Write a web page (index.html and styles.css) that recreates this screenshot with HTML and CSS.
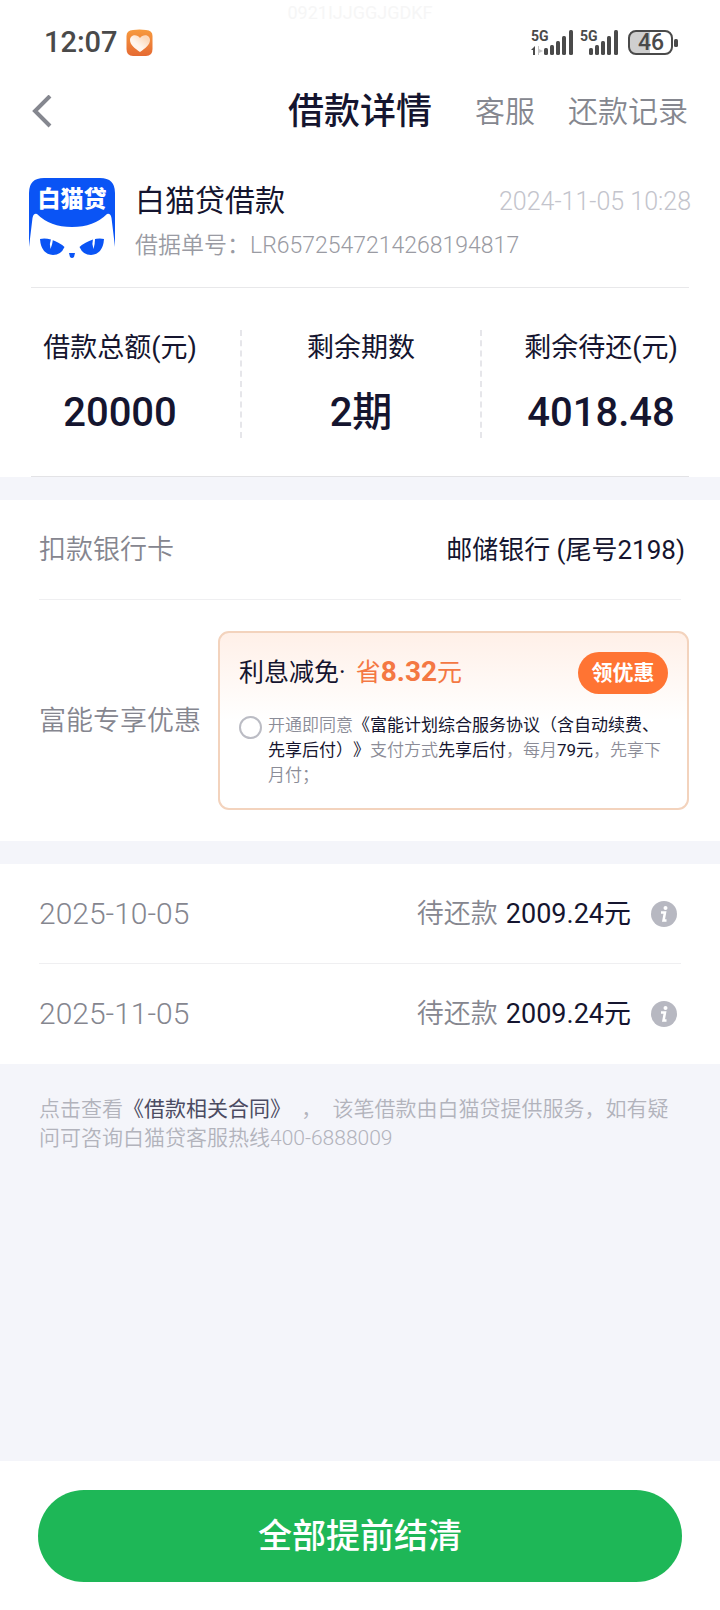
FILE: index.html
```html
<!DOCTYPE html>
<html lang="zh-CN">
<head>
<meta charset="utf-8">
<meta name="viewport" content="width=device-width, initial-scale=1">
<title>借款详情</title>
<link rel="stylesheet" href="styles.css">
</head>
<body>
<div class="page">
  <div class="watermark">0921IJJGGJGDKF</div>
  <div class="status">
    <div class="status-left">
      <span class="clock">12:07</span>
      <svg class="app-badge" viewBox="0 0 27 27" aria-hidden="true">
        <defs>
          <linearGradient id="badge" x1="0" y1="0" x2="0" y2="1"><stop offset="0" stop-color="#f79a3e"/><stop offset="1" stop-color="#e56a33"/></linearGradient>
          <linearGradient id="heart" x1="1" y1="0" x2="0" y2="1"><stop offset="0.2" stop-color="#fcd9bb"/><stop offset="0.6" stop-color="#fff6ee"/></linearGradient>
        </defs>
        <path d="M7 1Q13.500 0 20 1Q26.500 1.500 26.500 7V20Q26.500 27 20 27H7Q0.500 27 0.500 20V7Q0.500 1.500 7 1Z" fill="url(#badge)"/>
        <path d="M14 23C9 19.500 4 16 4 11C4 5.500 11 4.500 14 9C17 4.500 24 5.500 24 11C24 16 19 19.500 14 23Z" fill="url(#heart)"/>
      </svg>
    </div>
    <svg class="signals" viewBox="0 0 148 28" aria-hidden="true">
      <g fill="#4a4a4a">
        <text x="0" y="13" class="net">5G</text>
        <text x="49" y="13" class="net">5G</text>
        <path d="M0 22L4 18V27H2V22Z"/>
        <path d="M7 18H8V21L12 23L8 25V27H7Z" fill="#c4c4c4"/>
        <rect x="13" y="20" width="4" height="7" rx="1.500"/><rect x="19" y="17" width="4" height="10" rx="1.500"/><rect x="25" y="13" width="4" height="14" rx="1.500"/><rect x="31" y="8" width="4" height="19" rx="1.500"/><rect x="38" y="2" width="4" height="25" rx="1.500"/>
        <rect x="58" y="20" width="4" height="7" rx="1.500"/><rect x="64" y="17" width="4" height="10" rx="1.500"/><rect x="70" y="13" width="4" height="14" rx="1.500"/><rect x="76" y="8" width="4" height="19" rx="1.500"/><rect x="83" y="2" width="4" height="25" rx="1.500"/>
      </g>
      <path d="M119 3H104Q98 3 98 9V20Q98 26 104 26H119Z" fill="#cfcfcf"/>
      <rect x="98" y="3" width="43" height="23" rx="7" fill="none" stroke="#4a4a4a" stroke-width="2"/>
      <rect x="143" y="11" width="4" height="8" rx="1.500" fill="#4a4a4a"/>
      <text x="120" y="22" class="level" fill="#4a4a4a">46</text>
    </svg>
  </div>

  <header class="nav">
    <button class="back" type="button" aria-label="返回">
      <svg viewBox="0 0 20 34" aria-hidden="true"><path d="M18 1L3 16L18 31" fill="none" stroke="#85878f" stroke-width="4"/></svg>
    </button>
    <h1 class="nav-title">借款详情</h1>
    <nav class="nav-links">
      <a href="#service">客服</a>
      <a href="#records">还款记录</a>
    </nav>
  </header>

  <section class="loan">
    <svg class="logo" viewBox="0 0 86 80" role="img" aria-label="白猫贷">
      <path d="M0 69V15Q0 0 15 0H71Q86 0 86 15V69L82.500 40Q81.500 35 78 36Q65 49 43 49Q21 49 8 36Q4.500 35 3.500 40Z" fill="#0a54f5"/>
      <text x="43" y="29" class="logo-text" fill="#fff">白猫贷</text>
      <path d="M11 61Q16 60 22 61.500Q30 64 35.500 69Q32 77 24 77Q12 76 11 61Z" fill="#0a54f5"/>
      <path d="M75 61Q70 60 64 61.500Q56 64 50.500 69Q54 77 62 77Q74 76 75 61Z" fill="#0a54f5"/>
      <path d="M22 61Q20 66 21.500 71Q23.500 66 24 61Z" fill="#fff"/>
      <path d="M64 61Q62.500 66 64.500 71Q66 66 66 61Z" fill="#fff"/>
      <path d="M40 75H46L45 79Q43 81 41 79Z" fill="#0a54f5"/>
    </svg>
    <div class="loan-info">
      <div class="loan-top">
        <h2 class="loan-name">白猫贷借款</h2>
        <time class="loan-time">2024-11-05 10:28</time>
      </div>
      <p class="loan-no">借据单号：LR6572547214268194817</p>
    </div>
  </section>

  <dl class="stats">
    <div class="stat"><dt>借款总额(元)</dt><dd>20000</dd></div>
    <div class="stat"><dt>剩余期数</dt><dd>2期</dd></div>
    <div class="stat"><dt>剩余待还(元)</dt><dd>4018.48</dd></div>
  </dl>
  <div class="stats-end"></div>

  <section class="panel">
    <div class="row">
      <span class="label">扣款银行卡</span>
      <span class="bank">邮储银行 (尾号2198)</span>
    </div>
    <div class="offer-row">
      <span class="label">富能专享优惠</span>
      <div class="offer">
        <div class="offer-head">
          <p class="offer-title">利息减免· <span class="save">省<b>8.32</b>元</span></p>
          <button class="claim" type="button">领优惠</button>
        </div>
        <div class="agree">
          <input class="agree-radio" type="radio" id="agree">
          <label for="agree">开通即同意<em>《富能计划综合服务协议（含自动续费、先享后付）》</em>支付方式<em>先享后付</em>，每月<em>79元</em>，先享下月付；</label>
        </div>
      </div>
    </div>
  </section>

  <section class="panel">
    <div class="row">
      <time class="label date">2025-10-05</time>
      <span class="due"><span class="label">待还款</span><span>2009.24元</span>
        <button class="info" type="button" aria-label="说明"><svg viewBox="0 0 26 26" aria-hidden="true"><circle cx="13" cy="13" r="13" fill="#b7b8c1"/><circle cx="14.500" cy="7" r="2" fill="#fff"/><path d="M10 11.500H14L12.500 19.500H15.500" fill="none" stroke="#fff" stroke-width="2.500"/></svg></button>
      </span>
    </div>
    <div class="row">
      <time class="label date">2025-11-05</time>
      <span class="due"><span class="label">待还款</span><span>2009.24元</span>
        <button class="info" type="button" aria-label="说明"><svg viewBox="0 0 26 26" aria-hidden="true"><circle cx="13" cy="13" r="13" fill="#b7b8c1"/><circle cx="14.500" cy="7" r="2" fill="#fff"/><path d="M10 11.500H14L12.500 19.500H15.500" fill="none" stroke="#fff" stroke-width="2.500"/></svg></button>
      </span>
    </div>
  </section>

  <p class="note">点击查看<a href="#contract">《借款相关合同》</a>&nbsp;&nbsp;，&nbsp;&nbsp;该笔借款由白猫贷提供服务，如有疑问可咨询白猫贷客服热线400-6888009</p>

  <footer class="footer">
    <button class="settle" type="button">全部提前结清</button>
  </footer>
</div>
</body>
</html>
```

FILE: styles.css
```css
* {
  box-sizing: border-box;
  margin: 0;
  padding: 0;
}

body {
  background: #f4f5fa;
  color: #15152f;
  font-family: Roboto, "Noto Sans CJK SC", sans-serif;
  text-spacing-trim: space-all;
}

button {
  border: 0;
  background: none;
  font-family: inherit;
  cursor: pointer;
}

a {
  color: inherit;
  text-decoration: none;
}

svg {
  display: block;
}

.page {
  position: relative;
  display: flex;
  flex-direction: column;
  min-height: 100vh;
}

.watermark {
  position: absolute;
  top: 0;
  left: 0;
  right: 0;
  color: #f6f6f6;
  font-size: 18px;
  line-height: 26px;
  text-align: center;
}

.status {
  display: flex;
  align-items: center;
  justify-content: space-between;
  padding: 26px 41px 0 44px;
  background: #fff;
}

.status-left {
  display: flex;
  align-items: center;
  gap: 8px;
}

.clock {
  color: #4a4a4a;
  font-size: 29px;
  font-weight: 500;
  line-height: 32px;
}

.app-badge {
  width: 27px;
  height: 27px;
}

.signals {
  overflow: visible;
  width: 148px;
  height: 28px;
}

.net {
  font: 700 14px Roboto, sans-serif;
}

.level {
  font: 500 23px Roboto, sans-serif;
  text-anchor: middle;
}

.nav {
  display: grid;
  grid-template-columns: 1fr auto 1fr;
  align-items: center;
  padding: 21px 32px 0;
  background: #fff;
}

.back {
  width: 20px;
  height: 34px;
}

.nav-title {
  font-size: 36px;
  font-weight: 500;
  line-height: 66px;
}

.nav-links {
  display: flex;
  justify-content: flex-end;
  gap: 33px;
  color: #85878f;
  font-size: 30px;
  font-weight: 350;
  line-height: 66px;
  white-space: nowrap;
}

.loan {
  display: flex;
  gap: 20px;
  padding: 33px 29px 25px;
  background: linear-gradient(#e8e8ea, #e8e8ea) center bottom / calc(100% - 62px) 1px no-repeat #fff;
}

.logo {
  flex: none;
  width: 86px;
  height: 80px;
}

.logo-text {
  font: 900 23px "Noto Sans CJK SC", sans-serif;
  text-anchor: middle;
}

.loan-info {
  flex: 1;
}

.loan-top {
  display: flex;
  align-items: center;
  justify-content: space-between;
}

.loan-name {
  font-size: 30px;
  font-weight: 400;
  line-height: 46px;
}

.loan-time {
  color: #c3c4cc;
  font-size: 25px;
  font-weight: 350;
}

.loan-no {
  padding-top: 5px;
  color: #9a9ba3;
  font-size: 23px;
  font-weight: 350;
  line-height: 34px;
}

.stats {
  display: grid;
  grid-template-columns: repeat(3, 1fr);
  padding: 42px 0 38px;
  background: #fff;
  text-align: center;
}

.stat + .stat {
  border-left: 2px dashed #e6e6ea;
}

.stat dt {
  font-size: 27px;
  line-height: 36px;
}

.stat dd {
  padding-top: 22px;
  font-size: 40px;
  font-weight: 500;
  line-height: 50px;
}

.stats-end {
  height: 1px;
  background: linear-gradient(#e3e3e6, #e3e3e6) center / calc(100% - 62px) 1px no-repeat #fff;
}

.panel {
  margin-top: 23px;
  background: #fff;
}

.row {
  display: flex;
  align-items: center;
  justify-content: space-between;
  padding: 0 35px 0 39px;
  font-size: 27px;
  line-height: 100px;
}

.row:not(:last-child) {
  background: linear-gradient(#efeff1, #efeff1) center bottom / calc(100% - 78px) 1px no-repeat;
}

.label {
  color: #85868f;
  font-size: 27px;
  font-weight: 350;
}

.bank {
  font-size: 26px;
}

.date {
  font-size: 30px;
}

.offer-row {
  display: flex;
  align-items: center;
  gap: 17px;
  padding: 31px 31px 31px 39px;
}

.offer-row > .label {
  flex: none;
  line-height: 36px;
}

.offer {
  flex: 1;
  padding: 18px 19px 20px;
  border: 2px solid #f3d3bd;
  border-radius: 11px;
  background: linear-gradient(#fff0e8, #fff 50%);
}

.offer-head {
  display: flex;
  align-items: center;
  justify-content: space-between;
}

.offer-title {
  font-size: 25px;
  line-height: 42px;
}

.save {
  margin-left: 4px;
  color: #f47843;
}

.save b {
  font-size: 28px;
}

.claim {
  width: 90px;
  border-radius: 21px;
  background: #ff7433;
  color: #fff;
  font-size: 21px;
  font-weight: 700;
  line-height: 42px;
}

.agree {
  display: flex;
  gap: 6px;
  padding-top: 19px;
}

.agree-radio {
  appearance: none;
  flex: none;
  width: 23px;
  height: 23px;
  margin-top: 3px;
  border: 2px solid #bbbcc4;
  border-radius: 50%;
  background: #fff;
}

.agree label {
  color: #8b8c97;
  font-size: 17px;
  font-weight: 350;
  line-height: 25px;
}

.agree em {
  color: #15152f;
  font-style: normal;
  font-weight: 400;
}

.due {
  display: flex;
  align-items: center;
  gap: 8px;
  padding-right: 8px;
}

.info {
  width: 26px;
  height: 26px;
  margin-left: 12px;
}

.note {
  flex: 1;
  padding: 31px 39px;
  color: #b2b3bc;
  font-size: 21px;
  font-weight: 350;
  line-height: 29px;
}

.note a {
  color: #4b4b62;
  font-weight: 400;
}

.footer {
  padding: 29px 38px 28px;
  background: #fff;
}

.settle {
  width: 100%;
  border-radius: 46px;
  background: #1eb757;
  color: #fff;
  font-size: 34px;
  font-weight: 500;
  line-height: 92px;
}
```
